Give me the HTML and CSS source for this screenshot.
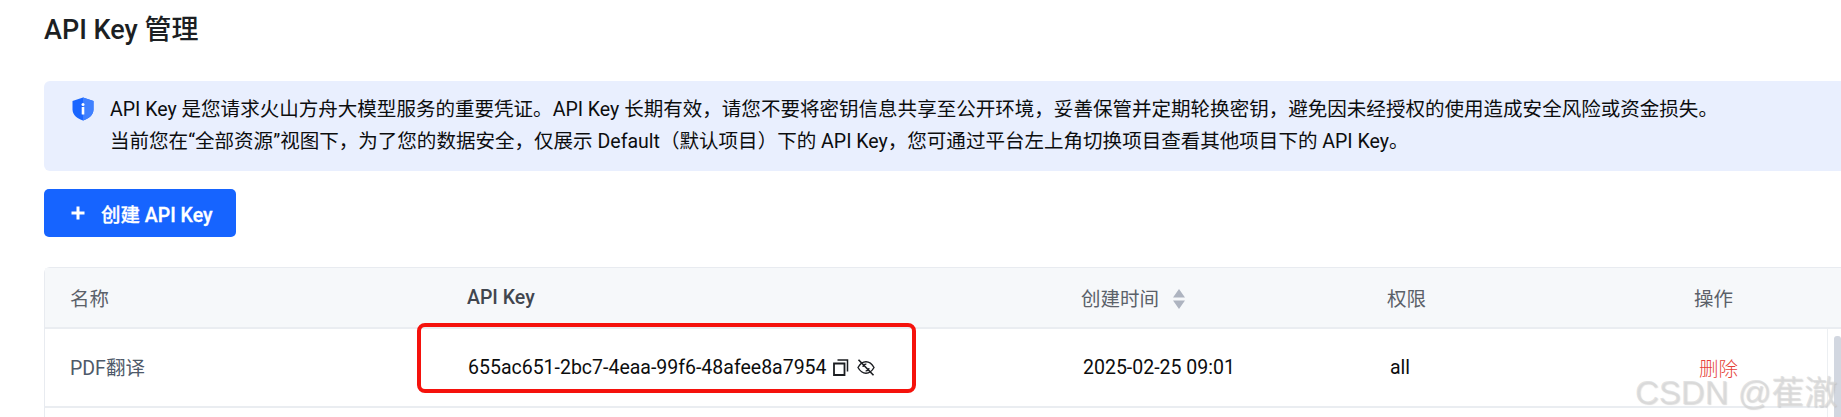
FILE: index.html
```html
<!DOCTYPE html>
<html lang="zh-CN">
<head>
<meta charset="utf-8">
<title>API Key 管理</title>
<link rel="stylesheet" href="styles.css">
</head>
<body>
<main class="page">
  <h1 class="title">API Key 管理</h1>
  <section class="notice">
    <svg class="notice-icon" viewBox="0 0 22 24" aria-hidden="true">
      <path d="M11 0.500 L21.500 4 V12.500 C21.500 18 16.500 21.800 11 23.500 C5.500 21.800 0.500 18 0.500 12.500 V4 Z" fill="#1a66ff"/>
      <path d="M11 0.500 L21.500 4 V12.500 C21.500 18 16.500 21.800 11 23.500 Z" fill="#3f80ff"/>
      <circle cx="11" cy="7.400" r="1.500" fill="#fff"/>
      <rect x="9.700" y="10" width="2.600" height="7.500" rx="0.500" fill="#fff"/>
    </svg>
    <div class="notice-text">
      <p>API Key 是您请求火山方舟大模型服务的重要凭证。API Key 长期有效，请您不要将密钥信息共享至公开环境，妥善保管并定期轮换密钥，避免因未经授权的使用造成安全风险或资金损失。</p>
      <p>当前您在“全部资源”视图下，为了您的数据安全，仅展示 Default（默认项目）下的 API Key，您可通过平台左上角切换项目查看其他项目下的 API Key。</p>
    </div>
  </section>
  <button class="create-btn" type="button">
    <svg class="plus" viewBox="0 0 14 14" aria-hidden="true"><path d="M7 0.500v13M0.500 7h13" stroke="#fff" stroke-width="3"/></svg>
    <span>创建 API Key</span>
  </button>
  <section class="table">
    <div class="row head">
      <div class="cell">名称</div>
      <div class="cell strong">API Key</div>
      <div class="cell">创建时间
        <svg class="sorter" viewBox="0 0 12 20" aria-hidden="true"><path d="M6 0 L12 8.500 H0 Z M0 11.500 H12 L6 20 Z" fill="#aeb4c0"/></svg>
      </div>
      <div class="cell">权限</div>
      <div class="cell">操作</div>
    </div>
    <div class="row body">
      <div class="cell name">PDF翻译</div>
      <div class="cell key">655ac651-2bc7-4eaa-99f6-48afee8a7954
        <svg class="act copy" viewBox="0 0 16 17" aria-hidden="true"><path d="M1 4.500h10.500v11.500h-10.500z" fill="none" stroke="#1b1d21" stroke-width="1.800"/><path d="M4.500 1h10v11.500" fill="none" stroke="#1b1d21" stroke-width="1.500"/></svg>
        <svg class="act eye" viewBox="0 0 18 17" aria-hidden="true"><path d="M1 8.500C3.500 4 6 2.700 9 2.700s5.500 1.300 8 5.800c-2.500 4.500-5 5.800-8 5.800s-5.500-1.300-8-5.800z" fill="none" stroke="#1b1d21" stroke-width="1.400"/><path d="M6 8a3.200 3.200 0 0 1 3.400-2.800M12 9a3.200 3.200 0 0 1-3.400 2.800" fill="none" stroke="#1b1d21" stroke-width="1.300"/><path d="M1.500 0.700l15 15.600" stroke="#1b1d21" stroke-width="1.600"/></svg>
      </div>
      <div class="cell time">2025-02-25 09:01</div>
      <div class="cell perm">all</div>
      <div class="cell danger">删除</div>
    </div>
    <div class="row next"></div>
  </section>
</main>
<div class="highlight"></div>
<div class="scroll-track"><div class="scroll-thumb"></div></div>
<div class="watermark">CSDN @萑澈</div>
</body>
</html>
```

FILE: styles.css
```css
* { box-sizing: border-box; }
html, body { margin: 0; height: 100%; }
body {
  position: relative;
  overflow: hidden;
  background: #fff;
  font-family: Roboto, "Noto Sans CJK SC", sans-serif;
  color: #0c0d0e;
}
.page { padding: 11px 0 0 44px; }
.title {
  margin: 0;
  font-size: 27px;
  line-height: 38px;
  font-weight: 500;
  color: #1c1f23;
}
.notice {
  display: flex;
  gap: 16px;
  height: 90px;
  margin-top: 32px;
  padding: 13px 0 0 28px;
  background: #e9effe;
  border-radius: 6px 0 0 6px;
  font-size: 19.55px;
  line-height: 32px;
}
.notice-icon { width: 22px; height: 24px; margin-top: 3px; flex: none; }
.notice-text p { margin: 0; white-space: nowrap; }
.create-btn {
  display: flex;
  align-items: center;
  width: 192px;
  height: 48px;
  margin-top: 18px;
  padding: 0 0 0 27px;
  border: 0;
  border-radius: 5px;
  background: #1664ff;
  color: #fff;
  font: 500 19.5px Roboto, "Noto Sans CJK SC", sans-serif;
  -webkit-text-stroke: 0.3px #fff;
}
.plus { width: 14px; height: 14px; margin-right: 16px; }
.table {
  margin-top: 30px;
  border: 1px solid #e8ebf0;
  border-right: 0;
  border-bottom: 0;
  border-radius: 6px 0 0 0;
}
.row {
  display: grid;
  grid-template-columns: 397px 614px 306px 307px 1fr;
  align-items: center;
  border-bottom: 2px solid #eaedf1;
}
.cell { padding-left: 25px; font-size: 19.5px; white-space: nowrap; }
.head { height: 61px; background: #f6f8fa; color: #5b6169; }
.strong { font-weight: 500; color: #41464f; }
.sorter { width: 12px; height: 20px; margin-left: 9px; vertical-align: -3px; }
.body { height: 79px; padding-bottom: 1px; }
.name { color: #4e5969; margin-bottom: 2px; }
.key { display: flex; align-items: center; padding-left: 26px; }
.time { padding-left: 27px; }
.perm { padding-left: 28px; }
.danger { padding-left: 30px; color: #e63f3a; font-weight: 300; }
.act { height: 17px; flex: none; }
.copy { width: 16px; margin-left: 6px; }
.eye { width: 18px; margin-left: 8px; }
.next { height: 20px; border-bottom: 0; }
.highlight {
  position: absolute;
  left: 417px;
  top: 323px;
  width: 499px;
  height: 70px;
  border: 4px solid #f5120c;
  border-radius: 8px;
}
.scroll-track {
  position: absolute;
  left: 1827px;
  top: 329px;
  right: 0;
  bottom: 0;
  background: #fff;
  border-left: 1px solid #eceff2;
}
.scroll-thumb {
  position: absolute;
  right: 0;
  top: 7px;
  bottom: 0;
  width: 7px;
  border-radius: 3px 3px 0 0;
  background: #d2d7e0;
}
.watermark {
  position: absolute;
  left: 1635px;
  top: 366px;
  font: 33px "Liberation Sans", "Noto Sans CJK SC", sans-serif;
  color: rgba(215, 215, 215, 0.7);
  text-shadow: 1px 1px 1px rgba(170, 170, 170, 0.4);
  white-space: nowrap;
}
```
